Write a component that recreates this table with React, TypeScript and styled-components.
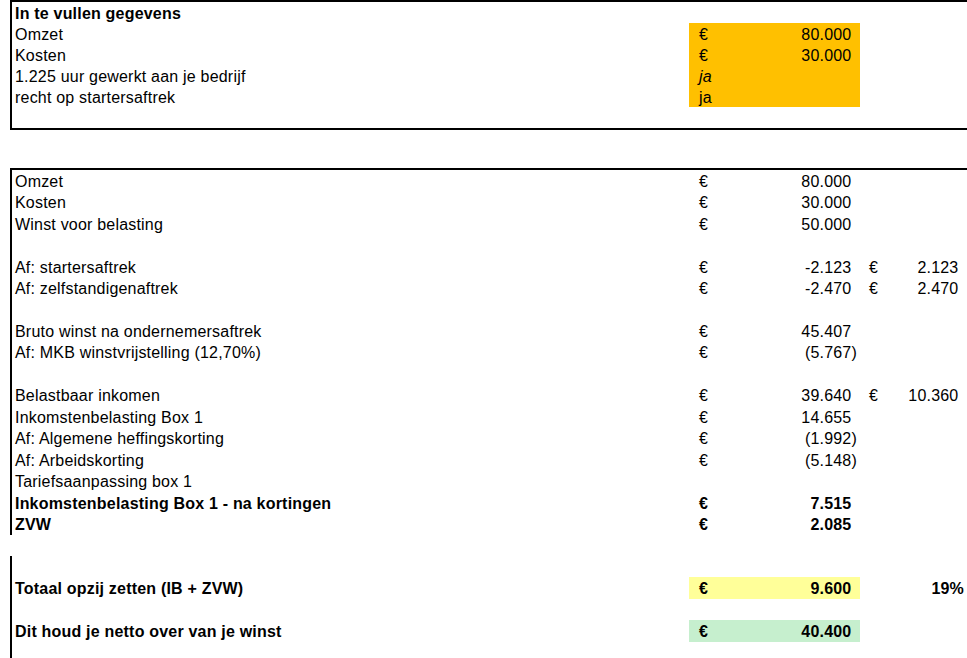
import React from 'react';
import styled, { createGlobalStyle } from 'styled-components';

const GlobalStyle = createGlobalStyle`
  html, body {
    margin: 0;
    padding: 0;
    background: #ffffff;
    overflow: hidden;
  }
  body {
    font-family: "Liberation Sans", Arial, sans-serif;
    font-size: 16px;
    letter-spacing: 0.2px;
    color: #000000;
  }
`;

const Sheet = styled.div`
  padding-left: 10px;
  width: 957px;
`;

const Block = styled.section<{ $top?: boolean; $bottom?: boolean; $gap?: number; $tail?: number }>`
  border-left: 2px solid #000;
  border-top: ${(p) => (p.$top ? '2px solid #000' : 'none')};
  border-bottom: ${(p) => (p.$bottom ? '2px solid #000' : 'none')};
  margin-top: ${(p) => p.$gap ?? 0}px;
  padding-bottom: ${(p) => p.$tail ?? 0}px;
`;

const Row = styled.div<{ $h: number }>`
  display: grid;
  grid-template-columns: 677px 171px 107px;
  height: ${(p) => p.$h}px;
`;

const Label = styled.div<{ $bold?: boolean }>`
  display: flex;
  align-items: center;
  padding: 2px 0 0 3px;
  font-weight: ${(p) => (p.$bold ? 700 : 400)};
  white-space: nowrap;
`;

const Money = styled.div<{ $fill?: string; $bold?: boolean }>`
  display: flex;
  align-items: center;
  justify-content: space-between;
  padding: 2px 3px 0 10px;
  background: ${(p) => p.$fill ?? 'transparent'};
  font-weight: ${(p) => (p.$bold ? 700 : 400)};
  white-space: nowrap;
`;

const Plain = styled.span<{ $italic?: boolean }>`
  font-style: ${(p) => (p.$italic ? 'italic' : 'normal')};
`;

const Extra = styled(Money)`
  padding-left: 9px;
`;

const Pct = styled.div`
  display: flex;
  align-items: center;
  justify-content: flex-end;
  padding: 2px 3px 0 0;
  font-weight: 700;
`;

const Pad = styled.span`
  visibility: hidden;
`;

type Line = {
  label?: string;
  bold?: boolean;
  value?: string;
  paren?: boolean;
  text?: string;
  italic?: boolean;
  extra?: string;
  pct?: string;
  fill?: string;
  h?: number;
};

const ORANGE = '#FFC000';
const YELLOW = '#FFFF99';
const GREEN = '#C6EFCE';

const input: Line[] = [
  { label: 'In te vullen gegevens', bold: true },
  { label: 'Omzet', value: '80.000', fill: ORANGE },
  { label: 'Kosten', value: '30.000', fill: ORANGE },
  { label: '1.225 uur gewerkt aan je bedrijf', text: 'ja', italic: true, fill: ORANGE },
  { label: 'recht op startersaftrek', text: 'ja', fill: ORANGE },
];

const calc: Line[] = [
  { label: 'Omzet', value: '80.000' },
  { label: 'Kosten', value: '30.000' },
  { label: 'Winst voor belasting', value: '50.000' },
  {},
  { label: 'Af: startersaftrek', value: '-2.123', extra: '2.123' },
  { label: 'Af: zelfstandigenaftrek', value: '-2.470', extra: '2.470' },
  {},
  { label: 'Bruto winst na ondernemersaftrek', value: '45.407' },
  { label: 'Af: MKB winstvrijstelling (12,70%)', value: '5.767', paren: true },
  {},
  { label: 'Belastbaar inkomen', value: '39.640', extra: '10.360' },
  { label: 'Inkomstenbelasting Box 1', value: '14.655' },
  { label: 'Af: Algemene heffingskorting', value: '1.992', paren: true },
  { label: 'Af: Arbeidskorting', value: '5.148', paren: true },
  { label: 'Tariefsaanpassing box 1' },
  { label: 'Inkomstenbelasting Box 1 - na kortingen', value: '7.515', bold: true },
  { label: 'ZVW', value: '2.085', bold: true },
];

const totals: Line[] = [
  { h: 21 },
  { label: 'Totaal opzij zetten (IB + ZVW)', value: '9.600', bold: true, fill: YELLOW, pct: '19%', h: 22 },
  { h: 21 },
  { label: 'Dit houd je netto over van je winst', value: '40.400', bold: true, fill: GREEN, h: 22 },
];

function Amount({ value, paren }: { value: string; paren?: boolean }) {
  return (
    <span>
      {paren ? `(${value})` : value}
      {!paren && <Pad>)</Pad>}
    </span>
  );
}

function SheetRow({ line, h }: { line: Line; h: number }) {
  const hasCell = line.value || line.text || line.fill;
  return (
    <Row $h={line.h ?? h}>
      <Label $bold={line.bold}>{line.label}</Label>
      {hasCell ? (
        <Money $fill={line.fill} $bold={line.bold}>
          {line.value ? <span>€</span> : <Plain $italic={line.italic}>{line.text}</Plain>}
          {line.value && <Amount value={line.value} paren={line.paren} />}
        </Money>
      ) : (
        <div />
      )}
      {line.extra ? (
        <Extra>
          <span>€</span>
          <Amount value={line.extra} />
        </Extra>
      ) : line.pct ? (
        <Pct>{line.pct}</Pct>
      ) : (
        <div />
      )}
    </Row>
  );
}

export default function App() {
  return (
    <>
      <GlobalStyle />
      <Sheet>
        <Block $top $bottom $tail={21}>
          {input.map((l, i) => (
            <SheetRow key={i} line={l} h={21} />
          ))}
        </Block>
        <Block $top $gap={38}>
          {calc.map((l, i) => (
            <SheetRow key={i} line={l} h={21.47} />
          ))}
        </Block>
        <Block $gap={21} $tail={16}>
          {totals.map((l, i) => (
            <SheetRow key={i} line={l} h={21} />
          ))}
        </Block>
      </Sheet>
    </>
  );
}
